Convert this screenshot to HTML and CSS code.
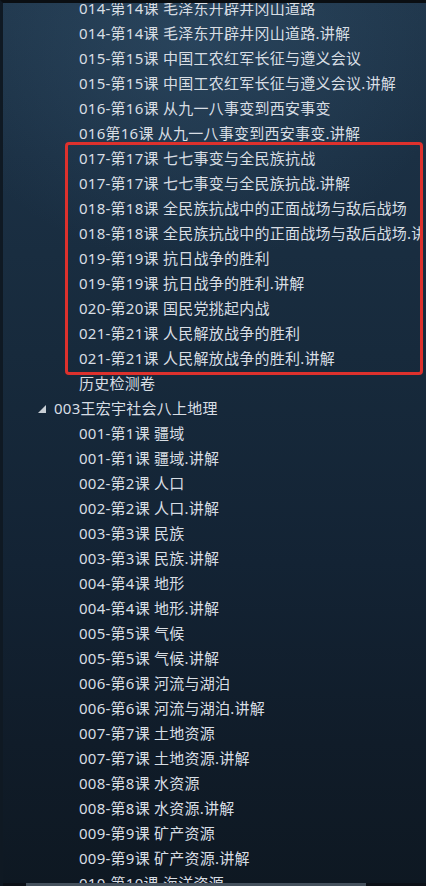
FILE: index.html
```html
<!DOCTYPE html>
<html lang="zh-CN">
<head>
<meta charset="utf-8">
<title>目录</title>
<link rel="stylesheet" href="styles.css">
</head>
<body>
<div class="frame">
  <div class="tree">
    <div class="row">014-第14课 毛泽东开辟井冈山道路</div>
    <div class="row">014-第14课 毛泽东开辟井冈山道路.讲解</div>
    <div class="row">015-第15课 中国工农红军长征与遵义会议</div>
    <div class="row">015-第15课 中国工农红军长征与遵义会议.讲解</div>
    <div class="row">016-第16课 从九一八事变到西安事变</div>
    <div class="row">016第16课 从九一八事变到西安事变.讲解</div>
    <div class="mark">
      <div class="row">017-第17课 七七事变与全民族抗战</div>
      <div class="row">017-第17课 七七事变与全民族抗战.讲解</div>
      <div class="row">018-第18课 全民族抗战中的正面战场与敌后战场</div>
      <div class="row">018-第18课 全民族抗战中的正面战场与敌后战场.讲解</div>
      <div class="row">019-第19课 抗日战争的胜利</div>
      <div class="row">019-第19课 抗日战争的胜利.讲解</div>
      <div class="row">020-第20课 国民党挑起内战</div>
      <div class="row">021-第21课 人民解放战争的胜利</div>
      <div class="row">021-第21课 人民解放战争的胜利.讲解</div>
    </div>
    <div class="row">历史检测卷</div>
    <div class="row folder"><span class="arrow"></span>003王宏宇社会八上地理</div>
    <div class="row">001-第1课 疆域</div>
    <div class="row">001-第1课 疆域.讲解</div>
    <div class="row">002-第2课 人口</div>
    <div class="row">002-第2课 人口.讲解</div>
    <div class="row">003-第3课 民族</div>
    <div class="row">003-第3课 民族.讲解</div>
    <div class="row">004-第4课 地形</div>
    <div class="row">004-第4课 地形.讲解</div>
    <div class="row">005-第5课 气候</div>
    <div class="row">005-第5课 气候.讲解</div>
    <div class="row">006-第6课 河流与湖泊</div>
    <div class="row">006-第6课 河流与湖泊.讲解</div>
    <div class="row">007-第7课 土地资源</div>
    <div class="row">007-第7课 土地资源.讲解</div>
    <div class="row">008-第8课 水资源</div>
    <div class="row">008-第8课 水资源.讲解</div>
    <div class="row">009-第9课 矿产资源</div>
    <div class="row">009-第9课 矿产资源.讲解</div>
    <div class="row">010-第10课 海洋资源</div>
  </div>
  <div class="hscroll"><div class="thumb"></div></div>
</div>
</body>
</html>
```
FILE: styles.css
```css
html, body {
  margin: 0;
  padding: 0;
  width: 426px;
  height: 886px;
  overflow: hidden;
  background: #0d141c;
}
.frame {
  width: 426px;
  height: 886px;
  box-sizing: border-box;
  border-top: 3px solid #0a0e12;
  border-left: 3px solid #0f1923;
  display: flex;
  flex-direction: column;
  overflow: hidden;
  background:
    radial-gradient(ellipse 260px 220px at 190px 40px, rgba(60, 95, 125, 0.35), rgba(60, 95, 125, 0) 100%),
    linear-gradient(180deg, #20374c 0px, #1b3044 150px, #172a3c 350px, #132334 560px, #101c29 740px, #0e1822 886px);
  font-family: "Noto Sans", "Noto Sans CJK SC", sans-serif;
  font-size: 15px;
  color: #d8dee4;
}
.tree {
  flex: 1;
  min-height: 0;
  overflow: hidden;
  margin-top: -7.5px;
}
.row {
  height: 25px;
  line-height: 25px;
  padding-left: 76px;
  white-space: nowrap;
  letter-spacing: 0.25px;
}
.mark {
  margin: -4px 0 -4px 62px;
  width: 352px;
  border: 3px solid #dd312d;
  border-radius: 4px;
  padding: 1px 0;
  overflow: hidden;
}
.mark .row {
  padding-left: 11px;
}
.folder {
  padding-left: 35px;
  display: flex;
  align-items: center;
}
.arrow {
  width: 0;
  height: 0;
  border-style: solid;
  border-width: 0 0 8px 8px;
  border-color: transparent transparent #c9cfd5 transparent;
  margin-right: 8px;
  margin-top: 2px;
}
.hscroll {
  height: 3px;
  flex: none;
  background: #0c1118;
  display: flex;
}
.thumb {
  margin-left: 23px;
  width: 340px;
  background: #45515d;
}
```
